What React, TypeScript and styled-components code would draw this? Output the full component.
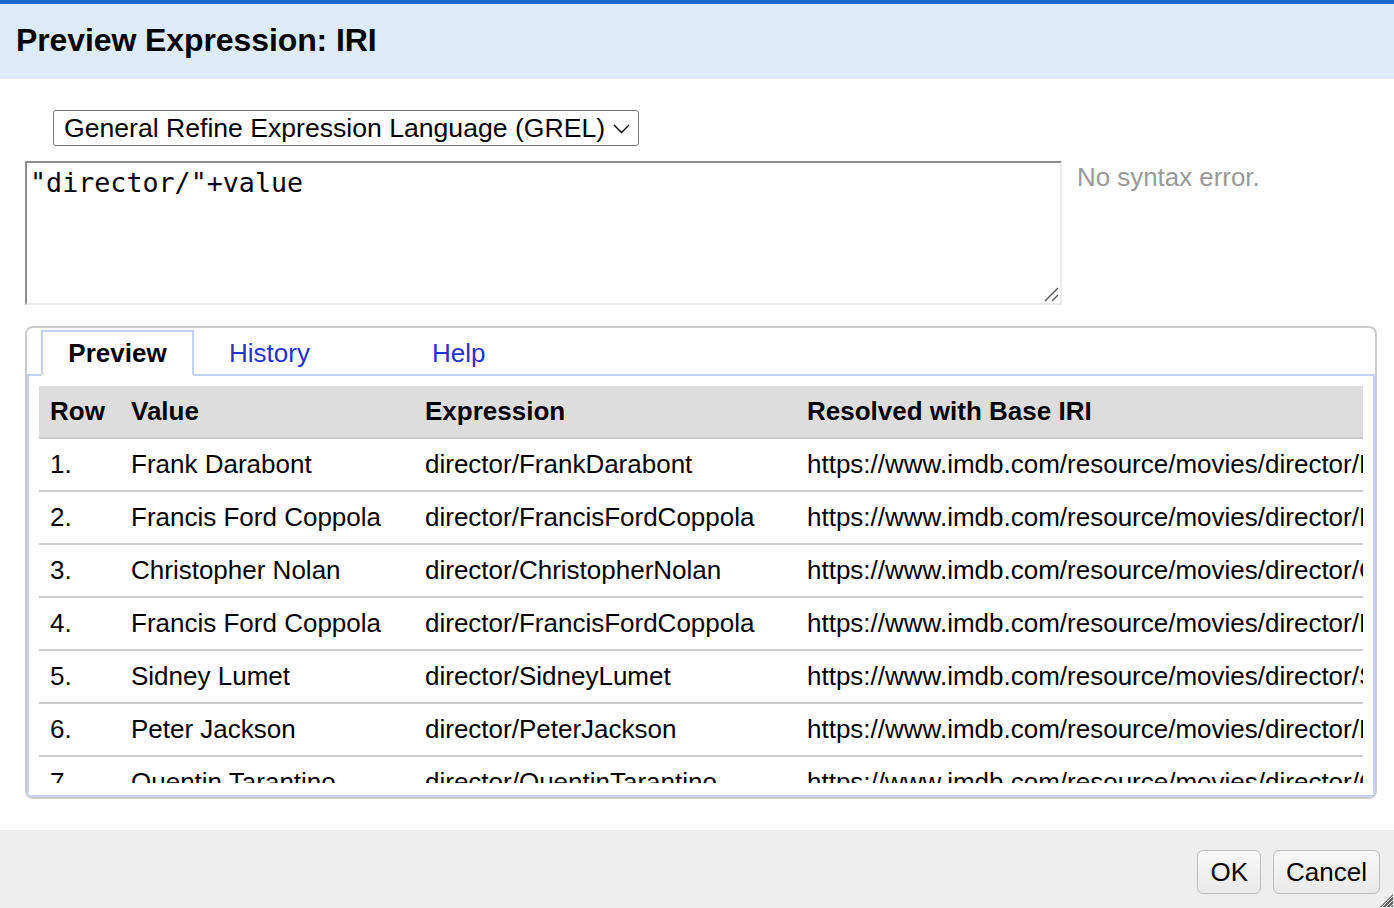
import React from "react";
import styled, { createGlobalStyle } from "styled-components";

const GlobalStyle = createGlobalStyle`
  html, body { margin: 0; padding: 0; background: #ffffff; }
  body { font-family: "Liberation Sans", Arial, sans-serif; color: #000; }
  * { box-sizing: border-box; }
`;

const Dialog = styled.div`
  display: flex;
  flex-direction: column;
  height: 100vh;
  border-top: 4px solid #1a66cc;
  background: #fff;
`;

const Header = styled.header`
  height: 75px;
  flex: none;
  background: #deebfb;
  display: flex;
  align-items: center;
  padding-left: 16px;
  padding-bottom: 2px;
`;

const Title = styled.h1`
  margin: 0;
  font-size: 32px;
  font-weight: bold;
  letter-spacing: -0.1px;
`;

const Body = styled.main`
  flex: 1;
  padding: 31px 17px 0 25px;
  display: flex;
  flex-direction: column;
`;

const SelectRow = styled.div`
  padding-left: 28px;
  display: flex;
`;

const SelectWrap = styled.div`
  position: relative;
  width: 586px;
  height: 36px;
`;

const LangSelect = styled.select`
  appearance: none;
  -webkit-appearance: none;
  width: 100%;
  height: 100%;
  border: 1px solid #767676;
  border-radius: 3px;
  background: #fff;
  font-family: "Liberation Sans", Arial, sans-serif;
  font-size: 26.6px;
  color: #000;
  padding: 0 30px 0 10px;
  margin: 0;
`;

const Chevron = styled.svg`
  position: absolute;
  right: 9px;
  top: 14px;
  pointer-events: none;
`;

const EditorRow = styled.div`
  margin-top: 15px;
  display: flex;
  align-items: flex-start;
  gap: 15px;
`;

const EditorWrap = styled.div`
  position: relative;
  display: flex;
`;

const Editor = styled.textarea`
  width: 1037px;
  height: 144px;
  margin: 0;
  border-top: 2px solid #8d8d8d;
  border-left: 2px solid #8d8d8d;
  border-right: 2px solid #ebebeb;
  border-bottom: 2px solid #ebebeb;
  padding: 4px 3px;
  font-family: "DejaVu Sans Mono", "Liberation Mono", monospace;
  font-size: 26.7px;
  color: #000;
  resize: none;
  outline: none;
`;

const ResizeMark = styled.svg`
  position: absolute;
  right: 3px;
  bottom: 3px;
  pointer-events: none;
`;

const Status = styled.div`
  margin-top: 2px;
  font-size: 25.9px;
  color: #999999;
`;

const TabsBox = styled.section`
  margin-top: 21px;
  height: 473px;
  border: 2px solid #cccccc;
  border-radius: 8px;
  padding-top: 2px;
  display: flex;
  flex-direction: column;
  overflow: hidden;
`;

const TabBar = styled.nav`
  display: flex;
  padding-left: 14px;
  height: 44px;
  flex: none;
`;

const Tab = styled.div<{ $active?: boolean }>`
  display: flex;
  align-items: center;
  font-size: 26px;
  position: relative;
  z-index: 1;
  ${(p) =>
    p.$active
      ? `
    width: 153px;
    height: 46px;
    justify-content: center;
    font-weight: bold;
    color: #000;
    background: #fff;
    border: 2px solid #c3d1f5;
    border-bottom: 2px solid #fff;
    padding-top: 1px;
  `
      : `
    width: 203px;
    height: 46px;
    padding-left: 35px;
    padding-top: 1px;
    color: #2531d1;
  `}
`;

const Panel = styled.div`
  flex: 1;
  min-height: 0;
  border: 2px solid #c3d1f5;
  padding: 10px 10px 12px 10px;
  display: flex;
  flex-direction: column;
`;

const TableScroll = styled.div`
  flex: 1;
  min-height: 0;
  overflow: hidden;
`;

const Table = styled.table`
  width: 100%;
  table-layout: fixed;
  border-collapse: collapse;
  font-size: 26px;
`;

const HeadCell = styled.th`
  height: 52px;
  background: #dddddd;
  border-bottom: 2px solid #cccccc;
  text-align: left;
  font-weight: bold;
  padding: 0 11px;
  white-space: nowrap;
  overflow: hidden;
`;

const Cell = styled.td`
  height: 53px;
  border-bottom: 2px solid #cccccc;
  padding: 0 11px;
  white-space: nowrap;
  overflow: hidden;
`;

const Footer = styled.footer`
  position: relative;
  height: 78px;
  flex: none;
  margin-top: 31px;
  background: #eeeeee;
  display: flex;
  justify-content: flex-end;
  align-items: flex-start;
  gap: 12px;
  padding: 20px 14px 0 0;
`;

const Button = styled.button`
  height: 44px;
  padding: 0 12px;
  border: 1px solid #bdbdbd;
  border-radius: 6px;
  background: linear-gradient(#f8f8f8, #e9e9e9);
  font-family: "Liberation Sans", Arial, sans-serif;
  font-size: 26px;
  color: #000;
`;

const Grip = styled.svg`
  position: absolute;
  right: 1px;
  bottom: 1px;
`;

const names = [
  "Frank Darabont",
  "Francis Ford Coppola",
  "Christopher Nolan",
  "Francis Ford Coppola",
  "Sidney Lumet",
  "Peter Jackson",
  "Quentin Tarantino",
];

export default function App() {
  return (
    <>
      <GlobalStyle />
      <Dialog>
        <Header>
          <Title>Preview Expression: IRI</Title>
        </Header>
        <Body>
          <SelectRow>
            <SelectWrap>
              <LangSelect defaultValue="grel">
                <option value="grel">General Refine Expression Language (GREL)</option>
              </LangSelect>
              <Chevron width="17" height="10" viewBox="0 0 17 10">
                <polyline points="1,1 8.5,8.5 16,1" fill="none" stroke="#000" strokeWidth="1.4" />
              </Chevron>
            </SelectWrap>
          </SelectRow>
          <EditorRow>
            <EditorWrap>
              <Editor defaultValue={'"director/"+value'} spellCheck={false} />
              <ResizeMark width="15" height="15" viewBox="0 0 15 15">
                <path d="M14 1 L1 14 M14 8 L8 14" stroke="#555" strokeWidth="1.4" />
              </ResizeMark>
            </EditorWrap>
            <Status>No syntax error.</Status>
          </EditorRow>
          <TabsBox>
            <TabBar>
              <Tab $active>Preview</Tab>
              <Tab>History</Tab>
              <Tab>Help</Tab>
            </TabBar>
            <Panel>
              <TableScroll>
                <Table>
                  <colgroup>
                    <col style={{ width: 81 }} />
                    <col style={{ width: 294 }} />
                    <col style={{ width: 382 }} />
                    <col />
                  </colgroup>
                  <thead>
                    <tr>
                      <HeadCell>Row</HeadCell>
                      <HeadCell>Value</HeadCell>
                      <HeadCell>Expression</HeadCell>
                      <HeadCell>Resolved with Base IRI</HeadCell>
                    </tr>
                  </thead>
                  <tbody>
                    {names.map((n, i) => {
                      const id = n.replace(/\s+/g, "");
                      return (
                        <tr key={i}>
                          <Cell>{i + 1}.</Cell>
                          <Cell>{n}</Cell>
                          <Cell>director/{id}</Cell>
                          <Cell>https://www.imdb.com/resource/movies/director/{id}</Cell>
                        </tr>
                      );
                    })}
                  </tbody>
                </Table>
              </TableScroll>
            </Panel>
          </TabsBox>
        </Body>
        <Footer>
          <Button>OK</Button>
          <Button>Cancel</Button>
          <Grip width="14" height="14" viewBox="0 0 14 14">
            <polygon points="14,1 14,14 1,14" fill="#666" />
            <path d="M14 3 L3 14 M14 7 L7 14 M14 11 L11 14" stroke="#eee" strokeWidth="1" />
          </Grip>
        </Footer>
      </Dialog>
    </>
  );
}
